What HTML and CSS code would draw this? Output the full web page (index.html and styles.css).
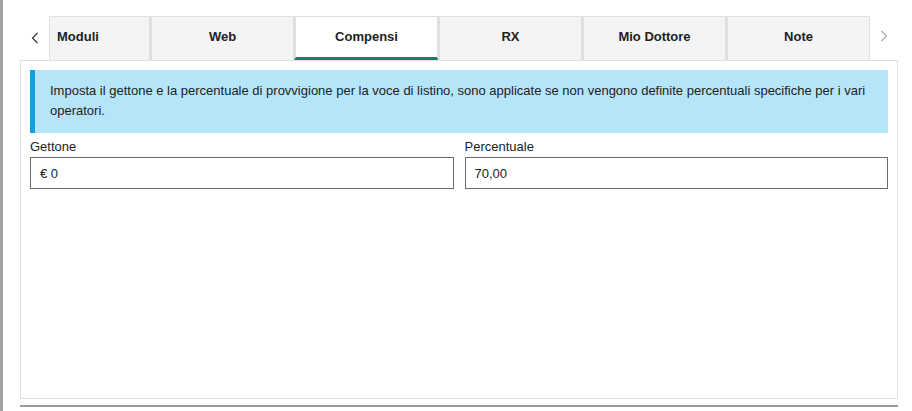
FILE: index.html
```html
<!DOCTYPE html>
<html lang="it">
<head>
<meta charset="utf-8">
<title>Compensi</title>
<link rel="stylesheet" href="styles.css">
</head>
<body>
<div class="page">
  <div class="sidebar"></div>
  <div class="main">
    <div class="tabbar">
      <button class="arrow arrow-left" aria-label="Precedente">
        <svg width="8" height="12" viewBox="0 0 8 12"><path d="M6.5 1 L1.5 6 L6.5 11" fill="none" stroke="#333" stroke-width="1.2"/></svg>
      </button>
      <div class="tabs">
        <div class="tab tab-first">Moduli</div>
        <div class="tab">Web</div>
        <div class="tab active">Compensi</div>
        <div class="tab">RX</div>
        <div class="tab">Mio Dottore</div>
        <div class="tab">Note</div>
      </div>
      <button class="arrow arrow-right" aria-label="Successivo">
        <svg width="8" height="12" viewBox="0 0 8 12"><path d="M1.5 1 L6.5 6 L1.5 11" fill="none" stroke="#aaa" stroke-width="1.2"/></svg>
      </button>
    </div>
    <div class="panel">
      <div class="alert">Imposta il gettone e la percentuale di provvigione per la voce di listino, sono applicate se non vengono definite percentuali specifiche per i vari operatori.</div>
      <div class="form-row">
        <div class="field">
          <label class="label">Gettone</label>
          <div class="input">€ 0</div>
        </div>
        <div class="field">
          <label class="label">Percentuale</label>
          <div class="input">70,00</div>
        </div>
      </div>
    </div>
    <div class="footer-line"></div>
  </div>
</div>
</body>
</html>
```

FILE: styles.css
```css
* { box-sizing: border-box; }
html, body { margin: 0; padding: 0; background: #fff; }
body {
  font-family: "Liberation Sans", Arial, sans-serif;
  font-size: 13px;
  color: #222;
  width: 912px;
  height: 411px;
  overflow: hidden;
}
.page {
  display: flex;
  height: 411px;
}
.sidebar {
  width: 3px;
  background: #a2a2a2;
  flex: none;
}
.main {
  flex: 1;
  padding: 16px 15px 0 17px;
  display: flex;
  flex-direction: column;
}
.tabbar {
  display: flex;
  height: 44px;
  align-items: stretch;
}
.arrow {
  border: 0;
  background: transparent;
  padding: 0;
  display: flex;
  align-items: center;
  justify-content: center;
  cursor: pointer;
}
.arrow-left { width: 29px; }
.arrow-right { width: 28px; padding-bottom: 5px; }
.tabs {
  display: flex;
  flex: 1;
  overflow: hidden;
}
.tab {
  width: 144px;
  flex: none;
  background: #f4f4f4;
  border: 1px solid #e0e0e0;
  border-bottom: 0;
  border-left-width: 2px;
  display: flex;
  align-items: center;
  justify-content: center;
  font-weight: bold;
  font-size: 13px;
  color: #222;
  padding-bottom: 5px;
}
.tab-first {
  width: 101px;
  justify-content: flex-start;
  padding-left: 7px;
  border-left-width: 1px;
}
.tab.active {
  background: #fff;
  border-bottom: 3px solid #177f6d;
  padding-bottom: 2px;
}
.panel {
  height: 339px;
  border: 1px solid #e0e0e0;
  padding: 9px;
}
.alert {
  background: #b4e5f9;
  border-left: 5px solid #16a0e0;
  padding: 11px 15px 12px 15px;
  line-height: 20px;
  font-size: 13px;
  color: #222;
}
.form-row {
  display: grid;
  grid-template-columns: 1fr 1fr;
  column-gap: 11px;
  margin-top: 5px;
}
.field {
  display: flex;
  flex-direction: column;
}
.label {
  line-height: 18px;
  margin-bottom: 1px;
  color: #222;
}
.input {
  height: 32px;
  border: 1px solid #6b6b6b;
  padding: 0 9px;
  display: flex;
  align-items: center;
  color: #222;
}
.footer-line {
  margin-top: 6px;
  height: 2px;
  background: #9a9a9a;
}
```
